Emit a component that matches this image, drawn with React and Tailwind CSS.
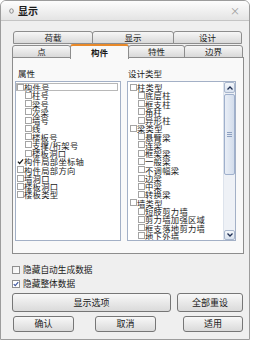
import React from 'react'

const font = "font-['Noto_Sans_CJK_SC',sans-serif]"

const leftItems = [
  [0, '构件号'],
  [1, '柱号'],
  [1, '梁号'],
  [1, '次梁'],
  [1, '墙号'],
  [1, '线'],
  [1, '楼板号'],
  [1, '支撑/桁架号'],
  [1, '楼板洞口'],
  [0, '构件局部坐标轴', true],
  [0, '构件局部方向'],
  [0, '墙洞口'],
  [0, '楼板洞口'],
  [0, '楼板类型'],
]

const rightItems = [
  [0, '柱类型'],
  [1, '底层柱'],
  [1, '框支柱'],
  [1, '角柱'],
  [1, '异形柱'],
  [0, '梁类型'],
  [1, '悬臂梁'],
  [1, '连梁'],
  [1, '框架梁'],
  [1, '一般梁'],
  [1, '不调幅梁'],
  [1, '边梁'],
  [1, '中梁'],
  [1, '转换梁'],
  [0, '墙类型'],
  [1, '短肢剪力墙'],
  [1, '剪力墙加强区域'],
  [1, '框支落地剪力墙'],
  [1, '地下外墙'],
]

function Check({ size = 7 }) {
  return (
    <svg width={size} height={size} viewBox="0 0 8 8" className="shrink-0">
      <path d="M1 4.2 L3 6.3 L7 1.5" fill="none" stroke="#1b1b1b" strokeWidth="1.4" />
    </svg>
  )
}

function TreeRow({ level, text, checked, focus }) {
  return (
    <div
      className={[
        'flex items-center h-[8.27px] whitespace-nowrap',
        level ? 'pl-[9px]' : 'pl-[1px]',
        focus ? 'outline outline-1 outline-[#b8b8b8] -outline-offset-1 mr-[2px]' : '',
      ].join(' ')}
    >
      {checked ? (
        <Check />
      ) : (
        <span className="w-[7px] h-[7px] border border-[#a4a4a4] bg-white shrink-0" />
      )}
      <span className="text-[8.3px] leading-[8.27px] text-[#1a1a1a] tracking-[0.3px]">{text}</span>
    </div>
  )
}

function Tab({ label, w, selected }) {
  return (
    <div
      className={[
        'flex items-center justify-center border border-[#8d8d8d] rounded-t-[3px] -ml-px first:ml-0 text-[8.5px] text-[#1a1a1a]',
        selected
          ? 'bg-[#f9f9f9] border-t-2 border-t-[#e8892a] border-b-0 h-[15px] -mb-px z-10 font-bold'
          : 'bg-gradient-to-b from-[#f7f7f7] to-[#d9d9d9] h-[13px]',
      ].join(' ')}
      style={{ width: w }}
    >
      {label}
    </div>
  )
}

function Button({ children, className }) {
  return (
    <div
      className={
        'flex items-center justify-center border border-[#767676] rounded-[3px] bg-gradient-to-b from-[#f8f8f8] to-[#dadada] text-[9px] text-[#1a1a1a] ' +
        className
      }
    >
      {children}
    </div>
  )
}

function Scrollbar() {
  return (
    <div className="w-[12px] h-full flex flex-col bg-[#eef1f6] border-l border-[#dde3ec]">
      <div className="h-[11px] border border-[#a9b7cd] rounded-[2px] bg-gradient-to-b from-[#f4f7fb] to-[#d9e2ef] flex items-center justify-center">
        <svg width="6" height="4" viewBox="0 0 6 4">
          <path d="M0.5 3.5 L3 1 L5.5 3.5" fill="none" stroke="#1f2f52" strokeWidth="1.3" />
        </svg>
      </div>
      <div className="mt-px h-[81px] border border-[#9fb0cc] rounded-[2px] bg-gradient-to-r from-[#e9eef6] to-[#d3ddec] flex flex-col items-center justify-center gap-[1px]">
        <span className="w-[5px] h-px bg-[#8da0c0]" />
        <span className="w-[5px] h-px bg-[#8da0c0]" />
        <span className="w-[5px] h-px bg-[#8da0c0]" />
      </div>
      <div className="flex-1" />
      <div className="h-[10px] border border-[#a9b7cd] rounded-[2px] bg-gradient-to-b from-[#f4f7fb] to-[#d9e2ef] flex items-center justify-center">
        <svg width="6" height="4" viewBox="0 0 6 4">
          <path d="M0.5 0.5 L3 3 L5.5 0.5" fill="none" stroke="#1f2f52" strokeWidth="1.3" />
        </svg>
      </div>
    </div>
  )
}

export default function App() {
  return (
    <div className={`w-[254px] h-[343px] bg-white ${font}`}>
      <div className="w-[250px] h-[340px] border border-[#9c9c9c] rounded-t-[6px] bg-[#efefef] flex flex-col overflow-hidden">
        {/* title bar */}
        <div className="h-[20px] flex items-center px-[8px] bg-gradient-to-b from-[#fdfdfd] to-[#e4e4e4] border-b border-[#c4c4c4]">
          <svg width="5" height="6" viewBox="0 0 5 6" className="mr-[4px]">
            <ellipse cx="2.5" cy="3" rx="1.8" ry="2.2" fill="none" stroke="#8a8a8a" strokeWidth="1" />
          </svg>
          <span className="text-[10px] font-bold text-[#1a1a1a]">显示</span>
          <span className="ml-auto mr-[1px] text-[10px] text-[#9a9a9a]">×</span>
        </div>

        {/* tabs */}
        <div className="pl-[11px] pt-[10px] flex flex-col">
          <div className="flex ml-[1px]">
            <Tab label="荷载" w={80} />
            <Tab label="显示" w={82} />
            <Tab label="设计" w={69} />
          </div>
          <div className="flex -mt-px items-end h-[15px]">
            <Tab label="点" w={59} />
            <Tab label="构件" w={59} selected />
            <Tab label="特性" w={57} />
            <Tab label="边界" w={59} />
          </div>

          {/* panel */}
          <div className="w-[232px] h-[197px] -mt-px border border-[#8d8d8d] bg-[#f9f9f9] flex pl-[2px] pt-[9px] gap-[6px]">
            <div className="flex flex-col">
              <div className="text-[8.5px] leading-[12px] text-[#1a1a1a] pl-[3px] mb-[2px]">属性</div>
              <div className="w-[106px] h-[160px] border border-[#a3b0c6] bg-white pt-[1px] overflow-hidden">
                {leftItems.map(([lv, t, c], i) => (
                  <TreeRow key={i} level={lv} text={t} checked={c} focus={i === 0} />
                ))}
              </div>
            </div>
            <div className="flex flex-col">
              <div className="text-[8.5px] leading-[12px] text-[#1a1a1a] pl-px mb-[2px]">设计类型</div>
              <div className="w-[109px] h-[160px] border border-[#a3b0c6] bg-white flex">
                <div className="flex-1 pt-[1px] pl-px overflow-hidden">
                  {rightItems.map(([lv, t], i) => (
                    <TreeRow key={i} level={lv} text={t} />
                  ))}
                </div>
                <Scrollbar />
              </div>
            </div>
          </div>
        </div>

        {/* options */}
        <div className="pl-[11px] pt-[12px] flex flex-col gap-[6px] text-[8.7px] text-[#1a1a1a]">
          <div className="flex items-center gap-[3px] h-[8px]">
            <span className="w-[8px] h-[8px] border border-[#8f8f8f] bg-gradient-to-br from-[#eeeeee] to-white" />
            <span>隐藏自动生成数据</span>
          </div>
          <div className="flex items-center gap-[3px] h-[8px]">
            <span className="w-[8px] h-[8px] border border-[#8f8f8f] bg-white flex items-center justify-center">
              <svg width="6" height="6" viewBox="0 0 8 8">
                <path d="M1 4.2 L3 6.3 L7 1.5" fill="none" stroke="#3d56a0" strokeWidth="1.5" />
              </svg>
            </span>
            <span>隐藏整体数据</span>
          </div>
        </div>

        {/* buttons */}
        <div className="pl-[11px] pt-[5px] flex flex-col gap-[4px]">
          <div className="flex gap-[6px]">
            <Button className="w-[159px] h-[19px]">显示选项</Button>
            <Button className="w-[66px] h-[19px]">全部重设</Button>
          </div>
          <div className="flex">
            <Button className="w-[61px] h-[16px] ml-[1px]">确认</Button>
            <Button className="w-[61px] h-[16px] ml-[21px]">取消</Button>
            <Button className="w-[60px] h-[16px] ml-[27px]">适用</Button>
          </div>
        </div>
      </div>
    </div>
  )
}
